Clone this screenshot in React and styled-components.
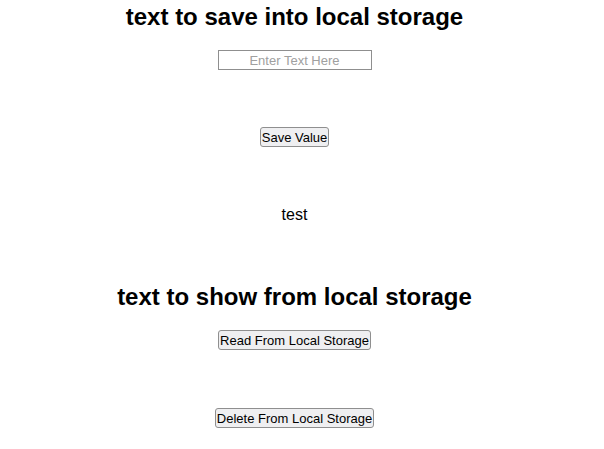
import React, { useState } from "react";
import styled, { createGlobalStyle } from "styled-components";

const GlobalStyle = createGlobalStyle`
	body {
		margin: 0;
		background: #fff;
		font-family: "Liberation Sans", Arial, sans-serif;
		color: #000;
	}
`;

const App = () => {
	const [text, setText] = useState("");
	const [shown, setShown] = useState("test");

	return (
		<Page>
			<GlobalStyle />
			<Heading>text to save into local storage</Heading>
			<TextInput
				placeholder="Enter Text Here"
				value={text}
				onChange={(e) => setText(e.target.value)}
			/>
			<Button mt="57px" onClick={() => setShown(text)}>
				Save Value
			</Button>
			<Value>{shown}</Value>
			<Heading mt="59px">text to show from local storage</Heading>
			<Button mt="19px">Read From Local Storage</Button>
			<Button mt="58px" onClick={() => setShown("")}>
				Delete From Local Storage
			</Button>
		</Page>
	);
};

export default App;

// content is centred as if a 15px scrollbar took the right edge
const Page = styled.div`
	display: flex;
	flex-direction: column;
	align-items: center;
	padding-right: 15px;
	padding-bottom: 20px;
`;

const Heading = styled.h2`
	margin: ${({ mt }) => mt || "3px"} 0 0;
	font-size: 24px;
	line-height: 28px;
	font-weight: bold;
`;

const TextInput = styled.input`
	margin-top: 19px;
	width: 154px;
	height: 20px;
	box-sizing: border-box;
	border: 1px solid #8f8f8f;
	border-radius: 0;
	padding: 0 4px;
	font-family: "Liberation Sans", Arial, sans-serif;
	font-size: 13px;
	text-align: center;
	&::placeholder {
		color: #a0a0a0;
	}
`;

const Button = styled.button`
	margin-top: ${({ mt }) => mt || "10px"};
	height: 20px;
	padding: 0 1px;
	font-family: "Liberation Sans", Arial, sans-serif;
	font-size: 13px;
	color: #000;
	background: #efeff1;
	border: 1px solid #8f8f8f;
	border-radius: 3px;
	cursor: pointer;
`;

const Value = styled.p`
	margin: 59px 0 0;
	font-size: 16px;
	line-height: 18px;
`;
